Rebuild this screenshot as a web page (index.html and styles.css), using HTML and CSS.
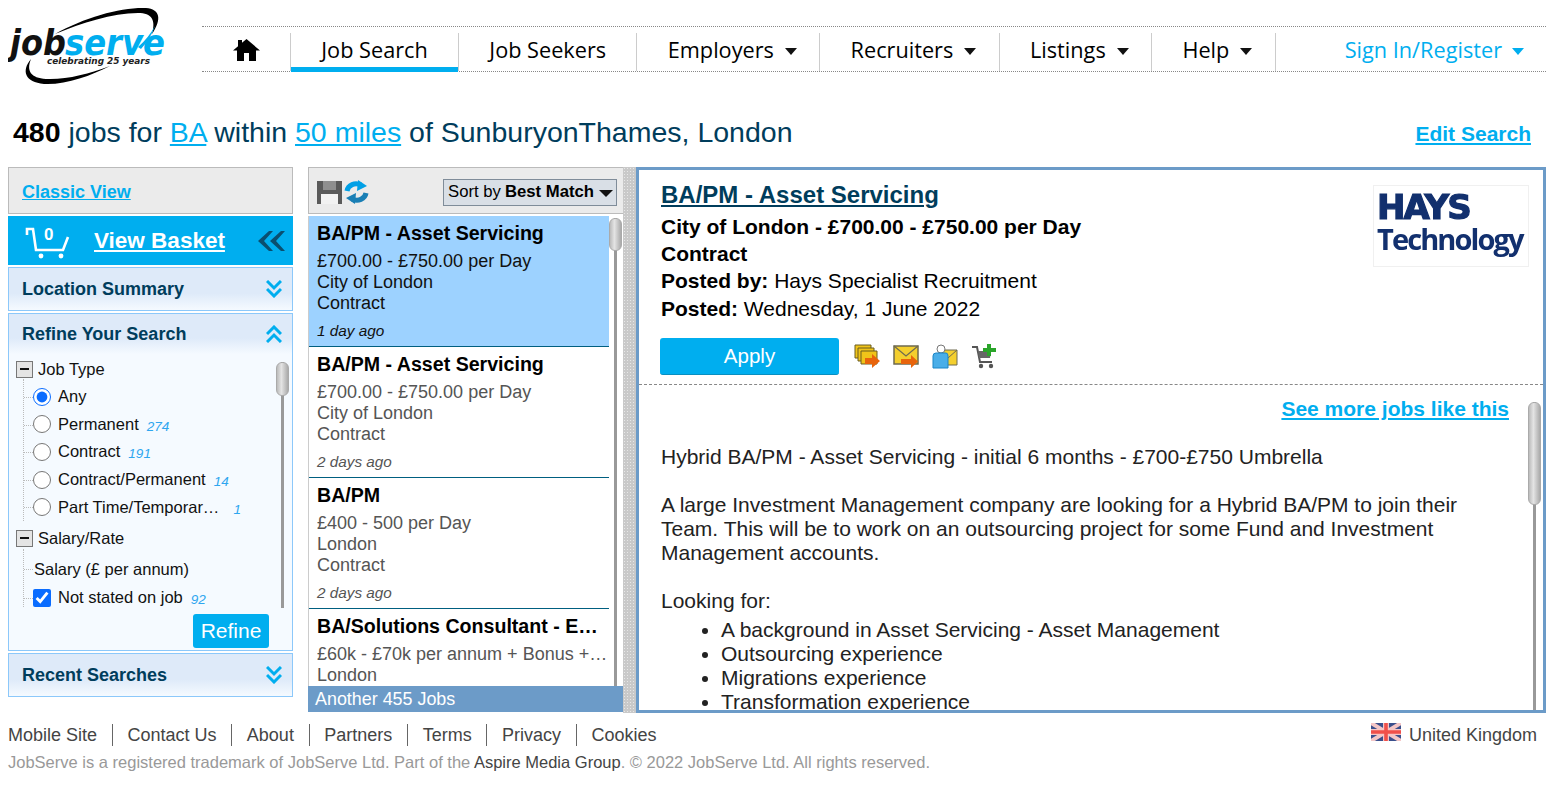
FILE: index.html
```html
<!DOCTYPE html>
<html lang="en">
<head>
    <meta charset="UTF-8">
    <meta name="viewport" content="width=device-width, initial-scale=1.0">
    <title>JobServe</title>
    <link rel="stylesheet" href="styles.css">
</head>
<body>
    <header class="top">
        <a class="logo" href="#">
            <svg width="166" height="85" viewBox="8 0 166 85">
                <path d="M55 34C85 17 122 7 146 8C160 9 162 19 152 34C156 20 152 13 138 13C112 13 82 23 55 34Z" fill="#000"/>
                <path d="M138 47C145 41 151 33 155 26C152 35 147 42 141 49Z" fill="#00aeef"/>
                <path d="M31 59C21 71 25 82 44 84C66 85 90 76 110 66C88 74 66 80 46 79C31 78 26 71 31 59Z" fill="#000"/>
                <text class="logo-job" x="10" y="55" textLength="56" lengthAdjust="spacingAndGlyphs">job</text>
                <text class="logo-serve" x="65" y="55" textLength="100" lengthAdjust="spacingAndGlyphs">serve</text>
                <text class="logo-tag" x="47" y="64" textLength="103" lengthAdjust="spacingAndGlyphs">celebrating 25 years</text>
            </svg>
        </a>
        <nav class="nav">
            <a class="nav-item nav-home" href="#">
                <svg width="27" height="22" viewBox="0 0 27 22"><path d="M13.5 0L27 11.5H23V22H16V14H11V22H4V11.5H0L5 7.2V1H9V3.8Z" fill="#000"/></svg>
            </a>
            <a class="nav-item active" href="#">Job Search</a>
            <a class="nav-item" href="#">Job Seekers</a>
            <a class="nav-item has-menu" href="#">Employers<i class="caret"></i></a>
            <a class="nav-item has-menu" href="#">Recruiters<i class="caret"></i></a>
            <a class="nav-item has-menu" href="#">Listings<i class="caret"></i></a>
            <a class="nav-item has-menu" href="#">Help<i class="caret"></i></a>
            <a class="nav-item sign-in" href="#">Sign In/Register<i class="caret"></i></a>
        </nav>
    </header>

    <div class="headline">
        <h1><b>480</b> jobs for <a href="#">BA</a> within <a href="#">50 miles</a> of SunburyonThames, London</h1>
        <a class="edit-search" href="#">Edit Search</a>
    </div>

    <main class="main">
        <aside class="side">
            <div class="classic"><a href="#">Classic View</a></div>
            <div class="basket">
                <svg width="48" height="36" viewBox="0 0 48 36" fill="none" stroke="#fff" stroke-width="2.6">
                    <path d="M2 12V6H8L11 27H38L43 14"/>
                    <circle cx="16" cy="33" r="2.4" fill="#fff" stroke="none"/>
                    <circle cx="36" cy="33" r="2.4" fill="#fff" stroke="none"/>
                </svg>
                <span class="basket-count">0</span>
                <a href="#">View Basket</a>
                <svg class="basket-arrows" width="27" height="20" viewBox="0 0 27 20" fill="#0a4f70"><path d="M11 0L0 10L11 20H15L6 10L15 0Z"/><path d="M23 0L12 10L23 20H27L18 10L27 0Z"/></svg>
            </div>
            <section class="box">
                <h2>Location Summary
                    <svg width="16" height="18" viewBox="0 0 16 18" fill="none" stroke="#00aeef" stroke-width="3"><path d="M1 1L8 8L15 1"/><path d="M1 9L8 16L15 9"/></svg>
                </h2>
            </section>
            <section class="box refine">
                <h2>Refine Your Search
                    <svg width="16" height="18" viewBox="0 0 16 18" fill="none" stroke="#00aeef" stroke-width="3"><path d="M1 9L8 2L15 9"/><path d="M1 17L8 10L15 17"/></svg>
                </h2>
                <div class="facets">
                    <div class="facet-head"><i class="toggle"></i>Job Type</div>
                    <ul class="facet-list">
                        <li><input type="radio" name="jobtype" checked><label>Any</label></li>
                        <li><input type="radio" name="jobtype"><label>Permanent</label><em>274</em></li>
                        <li><input type="radio" name="jobtype"><label>Contract</label><em>191</em></li>
                        <li><input type="radio" name="jobtype"><label>Contract/Permanent</label><em>14</em></li>
                        <li><input type="radio" name="jobtype"><label>Part Time/Temporar…</label><em class="far">1</em></li>
                    </ul>
                    <div class="facet-head salary-head"><i class="toggle"></i>Salary/Rate</div>
                    <ul class="facet-list open-end">
                        <li class="plain"><label>Salary (£ per annum)</label></li>
                        <li><input type="checkbox" checked><label>Not stated on job</label><em>92</em></li>
                    </ul>
                    <div class="rail facet-rail"><i></i></div>
                </div>
                <div class="refine-bar"><button>Refine</button></div>
            </section>
            <section class="box">
                <h2>Recent Searches
                    <svg width="16" height="18" viewBox="0 0 16 18" fill="none" stroke="#00aeef" stroke-width="3"><path d="M1 1L8 8L15 1"/><path d="M1 9L8 16L15 9"/></svg>
                </h2>
            </section>
        </aside>

        <section class="results">
            <div class="toolbar">
                <svg width="25" height="23" viewBox="0 0 25 23"><path d="M0 0H25V23H0Z" fill="#5a5a5a"/><path d="M6 0H19V9H6Z" fill="#8f8f8f"/><path d="M4 13H21V23H4Z" fill="#f2f2f2"/></svg>
                <svg width="25" height="24" viewBox="0 0 25 24" fill="none" stroke-width="5"><path d="M3 11C4 5 11 2 17 5" stroke="#00a0e6"/><path d="M14 0L23 6L13 11Z" fill="#00a0e6"/><path d="M22 13C21 19 14 22 8 19" stroke="#1a7fb5"/><path d="M11 24L2 18L12 13Z" fill="#1a7fb5"/></svg>
                <div class="sort">Sort by <b>Best Match</b><i class="caret dark"></i></div>
            </div>
            <div class="list">
                <article class="job selected">
                    <h3>BA/PM - Asset Servicing</h3>
                    <p>£700.00 - £750.00 per Day</p>
                    <p>City of London</p>
                    <p>Contract</p>
                    <time>1 day ago</time>
                </article>
                <article class="job">
                    <h3>BA/PM - Asset Servicing</h3>
                    <p>£700.00 - £750.00 per Day</p>
                    <p>City of London</p>
                    <p>Contract</p>
                    <time>2 days ago</time>
                </article>
                <article class="job">
                    <h3>BA/PM</h3>
                    <p>£400 - 500 per Day</p>
                    <p>London</p>
                    <p>Contract</p>
                    <time>2 days ago</time>
                </article>
                <article class="job">
                    <h3>BA/Solutions Consultant - Enterprise Data</h3>
                    <p>£60k - £70k per annum + Bonus + Benefits</p>
                    <p>London</p>
                    <p>Contract</p>
                </article>
                <div class="rail list-rail"><i></i></div>
            </div>
            <div class="more-jobs">Another 455 Jobs</div>
        </section>

        <div class="splitter"></div>

        <section class="detail">
            <div class="detail-top">
                <div class="summary">
                    <h2><a href="#">BA/PM - Asset Servicing</a></h2>
                    <p><b>City of London - £700.00 - £750.00 per Day</b></p>
                    <p><b>Contract</b></p>
                    <p><b>Posted by:</b> Hays Specialist Recruitment</p>
                    <p><b>Posted:</b> Wednesday, 1 June 2022</p>
                    <div class="actions">
                        <button class="apply">Apply</button>
                        <svg width="26" height="25" viewBox="0 0 26 25"><path d="M1 1H17V14H1Z" fill="#f0c419" stroke="#6b5d20"/><path d="M4 4H20V17H4Z" fill="#f0c419" stroke="#6b5d20"/><path d="M7 7H23V20H7Z" fill="#f0c419" stroke="#6b5d20"/><path d="M11 14H18V10L26 17L18 24V20H11Z" fill="#e8640c"/></svg>
                        <svg width="26" height="25" viewBox="0 0 26 25"><path d="M1 2H25V20H1Z" fill="#f4cf2e" stroke="#6e6a50" stroke-width="1.5"/><path d="M1 2L13 12L25 2" fill="none" stroke="#6e6a50" stroke-width="1.2"/><path d="M8 15H18V11L25 17.500L18 24V20H8Z" fill="#e8640c"/></svg>
                        <svg width="26" height="25" viewBox="0 0 26 25"><path d="M7 6H25V21H7Z" fill="#f4cf2e" stroke="#6e6a50"/><path d="M7 6L16 14L25 6" fill="none" stroke="#6e6a50"/><circle cx="9" cy="5" r="4" fill="#fff" stroke="#777"/><path d="M1 12Q1 9 4 9H14Q16 9 16 12V24H1Z" fill="#4aaee8" stroke="#1a86c8"/></svg>
                        <svg width="26" height="25" viewBox="0 0 26 25" fill="none"><path d="M1 3H6L9 18H21" stroke="#555" stroke-width="2"/><path d="M7 7H20L19 14H8Z" fill="#666"/><circle cx="10" cy="22" r="2.200" fill="#555"/><circle cx="20" cy="22" r="2.200" fill="#555"/><path d="M16 0H20V4H25V8H20V12H16V8H12V4H16Z" fill="#2aa52a"/></svg>
                    </div>
                </div>
                <div class="hays">
                    <span class="hays-big">HAYS</span>
                    <span class="hays-small">Technology</span>
                </div>
            </div>
            <div class="detail-body">
                <div class="detail-scroll">
                    <div class="see-more"><a href="#">See more jobs like this</a></div>
                    <p>Hybrid BA/PM - Asset Servicing - initial 6 months - £700-£750 Umbrella</p>
                    <p>A large Investment Management company are looking for a Hybrid BA/PM to join their Team. This will be to work on an outsourcing project for some Fund and Investment Management accounts.</p>
                    <p class="tight">Looking for:</p>
                    <ul>
                        <li>A background in Asset Servicing - Asset Management</li>
                        <li>Outsourcing experience</li>
                        <li>Migrations experience</li>
                        <li>Transformation experience</li>
                        <li>Stakeholder management</li>
                    </ul>
                </div>
                <div class="rail detail-rail"><i></i></div>
            </div>
        </section>
    </main>

    <footer class="footer">
        <div class="footer-row">
            <ul class="footer-links">
                <li><a href="#">Mobile Site</a></li>
                <li><a href="#">Contact Us</a></li>
                <li><a href="#">About</a></li>
                <li><a href="#">Partners</a></li>
                <li><a href="#">Terms</a></li>
                <li><a href="#">Privacy</a></li>
                <li><a href="#">Cookies</a></li>
            </ul>
            <div class="country">
                <svg width="30" height="18" viewBox="0 0 30 18">
                    <path d="M0 0H30V18H0Z" fill="#3a4f8c"/>
                    <path d="M0 0L30 18M30 0L0 18" stroke="#f4c6c6" stroke-width="4"/>
                    <path d="M15 0V18M0 9H30" stroke="#f4c6c6" stroke-width="6"/>
                    <path d="M15 0V18M0 9H30" stroke="#f0504a" stroke-width="3.600"/>
                </svg>
                <span>United Kingdom</span>
            </div>
        </div>
        <p class="legal">JobServe is a registered trademark of JobServe Ltd. Part of the <a href="#">Aspire Media Group</a>. © 2022 JobServe Ltd. All rights reserved.</p>
    </footer>
</body>
</html>
```

FILE: styles.css
```css
* {
    box-sizing: border-box;
}
html, body {
    height: 100%;
    overflow: hidden;
}
body {
    margin: 0;
    padding: 0 8px;
    font-family: "Liberation Sans", Arial, sans-serif;
    background-color: #fff;
    color: #000;
}
a {
    color: #00aeef;
}
h1, h2, h3, p, ul {
    margin: 0;
    padding: 0;
}
ul {
    list-style: none;
}

/* header */
.top {
    display: flex;
    height: 90px;
}
.logo {
    display: block;
    width: 194px;
    flex: none;
    height: 90px;
}
.logo svg {
    display: block;
}
.logo-job, .logo-serve {
    font-family: "DejaVu Sans", sans-serif;
    font-weight: bold;
    font-style: italic;
    font-size: 36px;
}
.logo-job {
    fill: #111;
}
.logo-serve {
    fill: #00aeef;
}
.logo-tag {
    font-family: "DejaVu Sans", sans-serif;
    font-weight: bold;
    font-style: italic;
    font-size: 9.5px;
    fill: #222;
}
.nav {
    display: flex;
    flex: 1;
    height: 46px;
    margin-top: 26px;
    border-top: 1px dotted #888;
    border-bottom: 1px dotted #888;
}
.nav-item {
    display: flex;
    align-items: center;
    height: 38px;
    margin-top: 6px;
    padding: 0 30.3px 6px;
    border-right: 1px solid #ccc;
    font-family: "Open Sans", sans-serif;
    font-size: 21.700px;
    color: #000;
    text-decoration: none;
    white-space: nowrap;
}
.nav-home {
    width: 89px;
    padding: 0 0 4px 31px;
}
.nav-item.active {
    position: relative;
}
.nav-item.active::after {
    content: "";
    position: absolute;
    left: 0;
    right: 0;
    bottom: -1px;
    height: 5px;
    background-color: #00aeef;
}
.has-menu {
    padding-right: 22.400px;
}
.caret {
    display: inline-block;
    width: 0;
    height: 0;
    margin-left: 11px;
    margin-top: 4px;
    border-left: 6.5px solid transparent;
    border-right: 6.5px solid transparent;
    border-top: 7px solid #111;
}
.sign-in {
    margin-left: auto;
    border-right: none;
    color: #00aeef;
    padding-right: 22px;
}
.sign-in .caret {
    border-top-color: #00aeef;
    margin-left: 10px;
}

/* headline */
.headline {
    display: flex;
    justify-content: space-between;
    align-items: flex-start;
    height: 77px;
    padding: 26px 15px 0 5px;
}
.headline h1 {
    font-size: 28.500px;
    font-weight: normal;
    color: #003d5c;
    white-space: nowrap;
}
.headline h1 b {
    color: #000;
}
.edit-search {
    margin-top: 6px;
    font-size: 21px;
    font-weight: bold;
}

/* three columns */
.main {
    display: flex;
    height: 546px;
}
.side {
    display: flex;
    flex-direction: column;
    gap: 2px;
    width: 285px;
    flex: none;
    margin-right: 15px;
}
.classic {
    height: 47px;
    padding: 14px 13px 0;
    background-color: #ebebeb;
    border: 1px solid #bbb;
    font-size: 18px;
    font-weight: bold;
}
.basket {
    position: relative;
    display: flex;
    align-items: center;
    height: 49px;
    padding-left: 17px;
    background-color: #00aeef;
}
.basket svg {
    flex: none;
}
.basket-count {
    position: absolute;
    left: 36px;
    top: 9px;
    color: #fff;
    font-size: 17px;
    font-weight: bold;
}
.basket a {
    margin-left: 21px;
    color: #fff;
    font-size: 22.500px;
    font-weight: bold;
}
.basket-arrows {
    margin-left: auto;
    margin-right: 8px;
}
.box {
    border: 1px solid #8cc8fa;
    background-color: #f5faff;
}
.box h2 {
    display: flex;
    justify-content: space-between;
    align-items: center;
    height: 42px;
    padding: 0 10px 0 13px;
    font-size: 18px;
    font-weight: bold;
    color: #003d5c;
    background: linear-gradient(#deeaf9 60%, #f5faff);
}
.refine {
    flex: none;
    height: 338px;
    position: relative;
}
.refine h2 {
    height: 40px;
}
.facets {
    position: relative;
    height: 254px;
    padding: 5px 0 0 7px;
    overflow: hidden;
    font-size: 16.500px;
    color: #111;
}
.facet-head {
    display: flex;
    align-items: center;
    height: 20px;
}
.salary-head {
    margin-top: 8px;
}
.toggle {
    position: relative;
    flex: none;
    width: 17px;
    height: 17px;
    margin-right: 5px;
    border: 1px solid #777;
    background-color: #e4e4e4;
}
.toggle::after {
    content: "";
    position: absolute;
    left: 3px;
    top: 6px;
    width: 9px;
    height: 2px;
    background-color: #111;
}
.facet-list {
    margin-left: 7px;
    border-left: 1px dotted #bbb;
    padding-top: 4px;
}
.facet-list li {
    position: relative;
    display: flex;
    align-items: center;
    height: 27.600px;
    padding-left: 9px;
}
.facet-list li::before {
    content: "";
    position: absolute;
    left: 0;
    top: 14px;
    width: 9px;
    border-top: 1px dotted #bbb;
}
.facet-list.open-end {
    padding-top: 6px;
    height: 90px;
}
.facet-list .plain {
    height: 29px;
    padding-left: 10px;
}
.facet-list .plain label {
    margin-left: 0;
}
.facet-list input {
    width: 18px;
    height: 18px;
    margin: 0;
    flex: none;
    accent-color: #0a6cff;
}
.facet-list label {
    margin-left: 7px;
    white-space: nowrap;
}
.facet-list em {
    margin: 4px 0 0 8px;
    font-size: 13.500px;
    color: #2ea6ef;
}
.facet-list em.far {
    margin-left: 14px;
}
.rail {
    position: absolute;
    width: 13px;
}
.rail::before {
    content: "";
    position: absolute;
    left: 5px;
    top: 0;
    bottom: 0;
    width: 3px;
    background-color: #999;
}
.rail i {
    position: absolute;
    left: 0;
    top: 0;
    width: 13px;
    border-radius: 6px;
    background: linear-gradient(to right, #bbb, #e4e4e4 40%, #aaa);
    border: 1px solid #aaa;
}
.facet-rail {
    left: 267px;
    top: 8px;
    bottom: 0;
}
.facet-rail i {
    height: 34px;
}
.refine-bar {
    display: flex;
    justify-content: flex-end;
    padding: 6px 23px 0 0;
}
.refine-bar button {
    width: 76px;
    height: 34px;
    border: none;
    border-radius: 3px;
    background-color: #00aeef;
    color: #fff;
    font-family: inherit;
    font-size: 21px;
}

/* results column */
.results {
    display: flex;
    flex-direction: column;
    width: 315px;
    flex: none;
}
.toolbar {
    display: flex;
    align-items: center;
    gap: 2px;
    height: 47px;
    padding: 3px 6px 0 8px;
    background-color: #ebebeb;
    border: 1px solid #bbb;
    border-right: none;
    flex: none;
}
.sort {
    display: flex;
    align-items: center;
    gap: 4px;
    height: 27px;
    margin-left: auto;
    padding: 0 3px 0 4px;
    background-color: #d9dfe6;
    border: 1px solid #7f8c99;
    font-size: 16.700px;
    white-space: nowrap;
}
.caret.dark {
    margin-left: 1px;
    margin-top: 2px;
    border-left-width: 7.500px;
    border-right-width: 7.500px;
    border-top-color: #111;
}
.list {
    position: relative;
    height: 470px;
    margin-top: 2px;
    overflow: hidden;
    border-left: 1px solid #ccc;
    flex: none;
}
.job {
    width: 300px;
    height: 131px;
    padding: 4px 0 0 8px;
    border-bottom: 1px solid #005f80;
    color: #555;
    font-size: 18px;
    line-height: 21px;
}
.job h3 {
    height: 30px;
    padding-right: 8px;
    margin-bottom: 1px;
    font-size: 19.600px;
    line-height: 26px;
    color: #000;
    overflow: hidden;
    white-space: nowrap;
    text-overflow: ellipsis;
}
.job p {
    overflow: hidden;
    white-space: nowrap;
    text-overflow: ellipsis;
}
.job time {
    display: block;
    margin-top: 6px;
    font-size: 15.300px;
    font-style: italic;
}
.job.selected {
    background-color: #9dd2ff;
    color: #111;
}
.list-rail {
    left: 300px;
    top: 2px;
    bottom: 0;
}
.list-rail i {
    height: 33px;
}
.more-jobs {
    height: 26px;
    padding-left: 7px;
    background-color: #6c9bc8;
    color: #fff;
    font-size: 17.900px;
    line-height: 26px;
}
.splitter {
    width: 13px;
    flex: none;
    background-color: #c9c9c9;
    background-image: radial-gradient(#e8e8e8 1px, transparent 1px);
    background-size: 3px 3px;
}

/* job detail */
.detail {
    display: flex;
    flex-direction: column;
    flex: none;
    width: 910px;
    border: 3px solid #6c9bc8;
}
.detail-top {
    display: flex;
    justify-content: space-between;
    height: 215px;
    padding: 10px 14px 0 21px;
    border-bottom: 1px dashed #888;
    flex: none;
}
.summary {
    font-size: 21px;
    line-height: 27.200px;
}
.summary h2 {
    font-size: 24px;
    line-height: 30px;
    margin-bottom: 3px;
}
.summary h2, .summary p {
    margin-left: 1px;
}
.summary h2 a {
    color: #003d5c;
}
.actions {
    display: flex;
    align-items: center;
    gap: 13px;
    margin-top: 16px;
}
.apply {
    width: 179px;
    height: 37px;
    margin-right: 2px;
    border: none;
    border-bottom: 1px solid #0a8fc0;
    border-radius: 3px;
    background-color: #00aeef;
    color: #fff;
    font-family: inherit;
    font-size: 20.500px;
}
.hays {
    display: flex;
    flex-direction: column;
    width: 156px;
    height: 82px;
    margin-top: 5px;
    padding: 3px 0 0 3px;
    border: 1px solid #f0f0f0;
    color: #12306e;
    filter: blur(0.4px);
}
.hays-big {
    font-family: "DejaVu Sans", sans-serif;
    font-size: 34px;
    font-weight: bold;
    line-height: 36px;
    letter-spacing: -2px;
    -webkit-text-stroke: 1.200px #12306e;
}
.hays-small {
    font-family: "Open Sans", sans-serif;
    font-size: 29px;
    font-weight: 700;
    line-height: 27px;
    letter-spacing: -1.900px;
}
.detail-body {
    position: relative;
    flex: 1;
    min-height: 0;
    overflow: hidden;
}
.detail-scroll {
    padding: 11px 34px 0 22px;
    font-size: 21px;
    line-height: 24px;
    color: #222;
}
.see-more {
    text-align: right;
    font-weight: bold;
    line-height: 26px;
    margin-bottom: 23px;
}
.detail-scroll p {
    margin-bottom: 24px;
}
.detail-scroll p.tight {
    margin-bottom: 5px;
}
.detail-scroll ul {
    list-style: disc;
    padding-left: 60px;
}
.detail-rail {
    right: 2px;
    top: 17px;
    bottom: 0;
}
.detail-rail i {
    height: 103px;
}

/* footer */
.footer {
    padding-top: 11px;
    font-size: 18px;
    color: #444;
}
.footer-row {
    display: flex;
    justify-content: space-between;
}
.footer-links {
    display: flex;
}
.footer-links li {
    padding: 0 14.700px;
    border-right: 1px solid #666;
    line-height: 22px;
}
.footer-links li:first-child {
    padding-left: 0;
}
.footer-links li:last-child {
    border-right: none;
}
.footer-links a {
    color: #444;
    text-decoration: none;
}
.country {
    display: flex;
    align-items: flex-start;
    gap: 8px;
    padding-right: 9px;
    line-height: 22px;
}
.country svg {
    margin-top: -1px;
    filter: blur(0.5px);
}
.legal {
    margin-top: 7px;
    font-size: 16.500px;
    color: #999;
}
.legal a {
    color: #444;
    text-decoration: none;
}
```
